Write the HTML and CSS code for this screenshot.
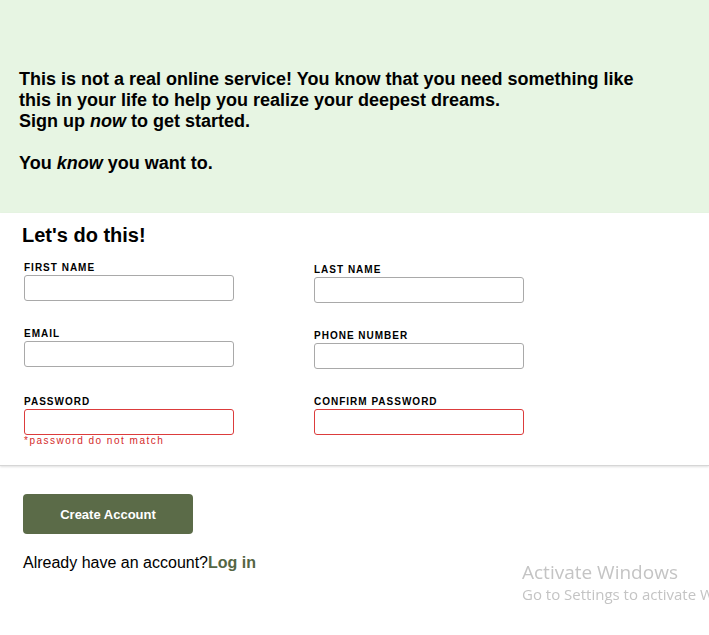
FILE: index.html
```html
<!DOCTYPE html>
<html lang="en">
<head>
<meta charset="utf-8">
<title>Sign up</title>
<link rel="stylesheet" href="styles.css">
</head>
<body>
<header class="hero">
  <p class="hero-text">This is not a real online service! You know that you need something like this in your life to help you realize your deepest dreams.<br>Sign up <em>now</em> to get started.<br><br>You <em>know</em> you want to.</p>
</header>
<main class="signup">
  <section class="form-section">
    <h2 class="form-title">Let's do this!</h2>
    <div class="form-grid">
      <div class="field">
        <label class="field-label">First Name</label>
        <input class="field-input" type="text">
      </div>
      <div class="field field-offset">
        <label class="field-label">Last Name</label>
        <input class="field-input" type="text">
      </div>
      <div class="field">
        <label class="field-label">Email</label>
        <input class="field-input" type="email">
      </div>
      <div class="field field-offset">
        <label class="field-label">Phone Number</label>
        <input class="field-input" type="tel">
      </div>
      <div class="field field-offset">
        <label class="field-label">Password</label>
        <input class="field-input field-error" type="password">
        <span class="error-text">*password do not match</span>
      </div>
      <div class="field field-offset">
        <label class="field-label">Confirm Password</label>
        <input class="field-input field-error" type="password">
      </div>
    </div>
  </section>
  <section class="actions">
    <button class="create-btn" type="button">Create Account</button>
    <p class="login-text">Already have an account?<a class="login-link" href="#">Log in</a></p>
  </section>
</main>
<div class="watermark">
  <div class="wm-title">Activate Windows</div>
  <div class="wm-sub">Go to Settings to activate Windows.</div>
</div>
</body>
</html>
```
FILE: styles.css
```css
html, body {
  margin: 0;
  padding: 0;
  background: #ffffff;
  font-family: "Liberation Sans", Arial, sans-serif;
  color: #000;
  overflow: hidden;
}

.hero {
  background: #e7f5e3;
  height: 213px;
  box-sizing: border-box;
  padding: 69px 19px 0 19px;
}

.hero-text {
  margin: 0;
  font-size: 18px;
  font-weight: bold;
  line-height: 21px;
  max-width: 630px;
}

.form-section {
  padding: 10px 0 0 22px;
  height: 253px;
  box-sizing: border-box;
  border-bottom: 1px solid #d6d6d6;
  box-shadow: 0 1px 2px rgba(0,0,0,0.12);
}

.form-title {
  margin: 0 0 15px 0;
  font-size: 20px;
  line-height: 24px;
  font-weight: bold;
}

.form-grid {
  display: grid;
  grid-template-columns: 210px 210px;
  column-gap: 80px;
  row-gap: 25px;
  padding-left: 2px;
}

.field {
  display: flex;
  flex-direction: column;
  position: relative;
}

.field-offset {
  margin-top: 2px;
}

.field-label {
  font-size: 10px;
  font-weight: bold;
  letter-spacing: 1px;
  text-transform: uppercase;
  line-height: 12px;
  margin-bottom: 1px;
}

.field-input {
  width: 210px;
  height: 26px;
  box-sizing: border-box;
  border: 1px solid #a9a9a9;
  border-radius: 3px;
  margin: 0;
  padding: 2px 6px;
  background: #fff;
}

.field-error {
  border-color: #dc3c3c;
}

.error-text {
  position: absolute;
  top: 39px;
  left: 0;
  font-size: 10px;
  color: #d42a2a;
  letter-spacing: 1.5px;
  line-height: 12px;
  white-space: nowrap;
}

.actions {
  padding: 28px 0 0 23px;
}

.create-btn {
  display: block;
  width: 170px;
  height: 40px;
  border: none;
  border-radius: 4px;
  background: #5b6b48;
  color: #fff;
  font-family: "Liberation Sans", Arial, sans-serif;
  font-size: 13px;
  font-weight: bold;
  cursor: pointer;
}

.login-text {
  margin: 19px 0 0 0;
  font-size: 16px;
  line-height: 20px;
}

.login-link {
  color: #556644;
  font-weight: bold;
  text-decoration: none;
}

.watermark {
  position: fixed;
  left: 522px;
  top: 560px;
  color: #c4c4c4;
  font-family: "Open Sans", "Noto Sans", sans-serif;
  white-space: nowrap;
  pointer-events: none;
}

.wm-title {
  font-size: 19px;
  line-height: 24px;
}

.wm-sub {
  font-size: 15px;
  line-height: 20px;
}
```
